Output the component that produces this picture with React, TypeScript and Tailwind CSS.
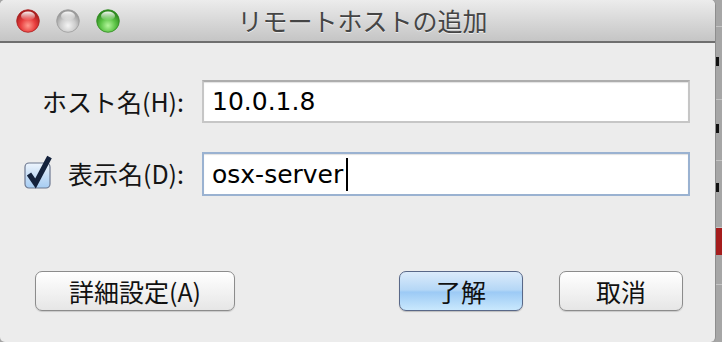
import React from 'react';

const jp = { fontFamily: '"Noto Sans CJK JP", "Noto Sans", sans-serif' };
const mono = { fontFamily: '"DejaVu Sans", "Noto Sans CJK JP", sans-serif' };

const Light: React.FC<{ id: string; edge: string; mid: string; light: string }> = ({ id, edge, mid, light }) => (
  <svg width="24" height="24" viewBox="0 0 24 24">
    <defs>
      <radialGradient id={`b-${id}`} cx="50%" cy="70%" r="60%">
        <stop offset="0%" stopColor={light} />
        <stop offset="55%" stopColor={mid} />
        <stop offset="100%" stopColor={edge} />
      </radialGradient>
      <linearGradient id={`h-${id}`} x1="0" y1="0" x2="0" y2="1">
        <stop offset="0%" stopColor="#ffffff" stopOpacity="0.95" />
        <stop offset="100%" stopColor="#ffffff" stopOpacity="0" />
      </linearGradient>
    </defs>
    <circle cx="12" cy="12" r="11.3" fill={`url(#b-${id})`} stroke={edge} strokeWidth="0.8" />
    <ellipse cx="12" cy="7" rx="7" ry="4.5" fill={`url(#h-${id})`} />
  </svg>
);

const CheckBox: React.FC = () => (
  <svg width="30" height="34" viewBox="0 0 30 34" className="mt-[-4px]">
    <defs>
      <linearGradient id="cb" x1="0" y1="0" x2="0" y2="1">
        <stop offset="0%" stopColor="#eef5fd" />
        <stop offset="50%" stopColor="#c7def6" />
        <stop offset="100%" stopColor="#a6cdf3" />
      </linearGradient>
    </defs>
    <rect x="1" y="8" width="25" height="25" rx="4" fill="url(#cb)" stroke="#6d7890" strokeWidth="1.2" />
    <path d="M5 19 L11.5 28.5 L25.5 2" fill="none" stroke="#14223c" strokeWidth="5.2" strokeLinejoin="miter" strokeLinecap="butt" />
  </svg>
);

const Field: React.FC<{ value: string; focused?: boolean }> = ({ value, focused }) => (
  <div
    className={
      focused
        ? 'h-full w-[488px] flex items-center bg-white border-2 border-[#9ab2d1] pl-[8px] shadow-[inset_0_1px_1px_rgba(0,0,0,0.12)]'
        : 'h-full w-[488px] flex items-center bg-white border-2 border-[#c6c6c6] border-t-[#adadad] pl-[8px] shadow-[inset_0_1px_1px_rgba(0,0,0,0.12)]'
    }
  >
    <span className="text-[25px] text-black leading-none" style={mono}>{value}</span>
    {focused && <span className="ml-[3px] w-[2px] h-[33px] bg-black" />}
  </div>
);

const App: React.FC = () => {
  return (
    <div className="w-[722px] h-[342px] flex bg-[#a4a4a4] overflow-hidden">
      <div className="w-[716px] h-full flex flex-col bg-[#ececec] rounded-[5px] overflow-hidden border-r border-[#8d8d8d]">
        {/* title bar */}
        <div className="h-[43px] shrink-0 grid grid-cols-[1fr_auto_1fr] items-center bg-linear-to-b from-[#ececec] to-[#c5c5c5] border-b-2 border-[#6f6f6f]">
          <div className="flex items-center gap-[16px] pl-[16px]">
            <Light id="r" edge="#a91f1f" mid="#e83d3d" light="#ff9a8e" />
            <Light id="g" edge="#9a9a9a" mid="#cdcdcd" light="#f4f4f4" />
            <Light id="n" edge="#2f8a1f" mid="#5cc446" light="#b4f59c" />
          </div>
          <div className="text-[25px] text-[#454545] pl-[10px] [text-shadow:0_1px_0_rgba(255,255,255,0.6)]" style={jp}>
            リモートホストの追加
          </div>
          <div />
        </div>

        {/* body */}
        <div className="flex-1 flex flex-col pt-[37px]">
          <div className="h-[43px] flex items-center">
            <div className="w-[184px] flex justify-end text-[25px] text-[#151515]" style={jp}>
              ホスト名(H):
            </div>
            <div className="ml-[18px] h-full">
              <Field value="10.0.1.8" />
            </div>
          </div>

          <div className="h-[44px] mt-[29px] flex items-center">
            <div className="w-[184px] flex items-center pl-[24px]">
              <CheckBox />
              <div className="ml-auto text-[25px] text-[#151515]" style={jp}>
                表示名(D):
              </div>
            </div>
            <div className="ml-[18px] h-full">
              <Field value="osx-server" focused />
            </div>
          </div>

          <div className="mt-[75px] flex items-center pl-[35px] pr-[32px]">
            <button
              className="w-[200px] h-[40px] rounded-[7px] border border-[#8c8c8c] bg-linear-to-b from-white to-[#e6e6e6] shadow-[0_1px_1px_rgba(0,0,0,0.15)] text-[25px] text-[#111] leading-none flex items-center justify-center"
              style={jp}
            >
              詳細設定(A)
            </button>
            <button
              className="ml-auto w-[124px] h-[40px] rounded-[7px] border border-[#596888] bg-[linear-gradient(to_bottom,#dbebfb_0%,#b5d7f6_47%,#9ccaf5_53%,#c9e8fd_100%)] shadow-[0_1px_1px_rgba(0,0,0,0.2)] text-[25px] text-[#111] leading-none flex items-center justify-center"
              style={jp}
            >
              了解
            </button>
            <button
              className="ml-[36px] w-[124px] h-[40px] rounded-[7px] border border-[#8c8c8c] bg-linear-to-b from-white to-[#e6e6e6] shadow-[0_1px_1px_rgba(0,0,0,0.15)] text-[25px] text-[#111] leading-none flex items-center justify-center"
              style={jp}
            >
              取消
            </button>
          </div>
        </div>
      </div>

      {/* background window peeking at the right */}
      <div className="w-[6px] h-full flex flex-col bg-[#a6a6a6]">
        <div className="h-[27px] border-b border-[#c4c4c4]" />
        <div className="h-[30px]" />
        <div className="h-[9px] w-[3px] bg-[#111]" />
        <div className="h-[34px] border-b border-[#c4c4c4]" />
        <div className="h-[24px]" />
        <div className="h-[9px] w-[3px] bg-[#111]" />
        <div className="h-[28px] border-b border-[#c4c4c4]" />
        <div className="h-[22px]" />
        <div className="h-[9px] w-[3px] bg-[#111]" />
        <div className="h-[36px] border-b border-[#c4c4c4]" />
        <div className="h-[27px] bg-[#a51c1c]" />
        <div className="h-[30px] border-b border-[#c4c4c4]" />
      </div>
    </div>
  );
};

export default App;
